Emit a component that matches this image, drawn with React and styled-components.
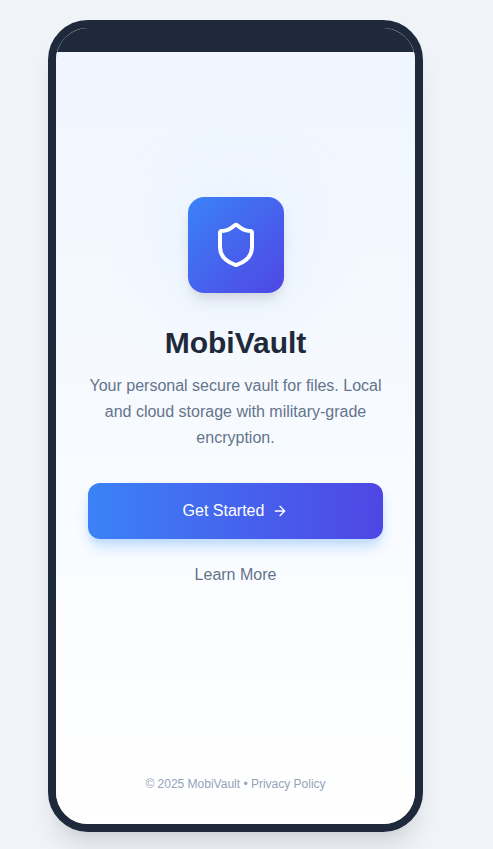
import React from "react";
import styled, { createGlobalStyle } from "styled-components";

const GlobalStyle = createGlobalStyle`
  *, *::before, *::after { box-sizing: border-box; }
  html { height: 100%; overflow: hidden; }
  body {
    margin: 0;
    background: #f0f4f8;
    font-family: "Liberation Sans", Arial, sans-serif;
  }
`;

const Page = styled.div`
  display: flex;
  width: 471px;
  height: 849px;
  padding-top: 20px;
  justify-content: center;
  align-items: flex-start;
`;

const Phone = styled.div`
  display: flex;
  flex-direction: column;
  flex: none;
  width: 375px;
  height: 812px;
  border: 8px solid #1e293b;
  border-radius: 40px;
  overflow: hidden;
  background: #ffffff;
  box-shadow: 0 20px 25px -5px rgba(0, 0, 0, 0.1), 0 10px 10px -5px rgba(0, 0, 0, 0.04);
`;

const StatusBar = styled.div`
  flex: none;
  height: 24px;
  background: #1e293b;
`;

const Screen = styled.main`
  display: flex;
  flex: 1;
  flex-direction: column;
  align-items: center;
  padding: 145px 32px 32px;
  background: linear-gradient(to bottom, #eff6ff, #ffffff);
`;

const Logo = styled.div`
  display: flex;
  align-items: center;
  justify-content: center;
  flex: none;
  width: 96px;
  height: 96px;
  border-radius: 16px;
  background: linear-gradient(to bottom right, #3b82f6, #4f46e5);
  box-shadow: 0 10px 15px -3px rgba(0, 0, 0, 0.1), 0 4px 6px -2px rgba(0, 0, 0, 0.05),
    0 0 60px 20px rgba(219, 234, 254, 0.3);
`;

const Title = styled.h1`
  margin: 32px 0 8px;
  font-size: 30px;
  line-height: 36px;
  font-weight: 700;
  color: #1e293b;
`;

const Description = styled.p`
  margin: 4px 0 32px;
  font-size: 16px;
  line-height: 26px;
  text-align: center;
  color: #64748b;
`;

const PrimaryButton = styled.button`
  display: flex;
  align-items: center;
  justify-content: center;
  gap: 8px;
  flex: none;
  width: 100%;
  height: 56px;
  padding: 0;
  border: 0;
  border-radius: 12px;
  background: linear-gradient(to right, #3b82f6, #4f46e5);
  box-shadow: 0 10px 15px -3px #bfdbfe, 0 4px 6px -2px #bfdbfe;
  color: #ffffff;
  font: 16px/24px "Liberation Sans", Arial, sans-serif;
`;

const TextButton = styled.button`
  width: 100%;
  height: 48px;
  margin-top: 12px;
  padding: 0;
  border: 0;
  background: transparent;
  color: #64748b;
  font: 16px/24px "Liberation Sans", Arial, sans-serif;
`;

const Footer = styled.footer`
  margin-top: auto;
  font-size: 12px;
  line-height: 16px;
  color: #94a3b8;
`;

const ShieldIcon = () => (
  <svg width="48" height="48" viewBox="0 0 24 24" fill="none" stroke="#fff" strokeWidth="2" strokeLinecap="round" strokeLinejoin="round">
    <path d="M20 13c0 5-3.5 7.5-7.66 8.95a1 1 0 0 1-.67-.01C7.5 20.5 4 18 4 13V6a1 1 0 0 1 1-1c2 0 4.5-1.2 6.24-2.72a1.17 1.17 0 0 1 1.52 0C14.51 3.81 17 5 19 5a1 1 0 0 1 1 1z" />
  </svg>
);

const ArrowIcon = () => (
  <svg width="16" height="16" viewBox="0 0 24 24" fill="none" stroke="currentColor" strokeWidth="2" strokeLinecap="round" strokeLinejoin="round">
    <path d="M5 12h14M12 5l7 7-7 7" />
  </svg>
);

export default function App() {
  return (
    <>
      <GlobalStyle />
      <Page>
        <Phone>
          <StatusBar />
          <Screen>
            <Logo><ShieldIcon /></Logo>
            <Title>MobiVault</Title>
            <Description>
              Your personal secure vault for files. Local and cloud storage with military-grade encryption.
            </Description>
            <PrimaryButton>Get Started<ArrowIcon /></PrimaryButton>
            <TextButton>Learn More</TextButton>
            <Footer>© 2025 MobiVault • Privacy Policy</Footer>
          </Screen>
        </Phone>
      </Page>
    </>
  );
}
